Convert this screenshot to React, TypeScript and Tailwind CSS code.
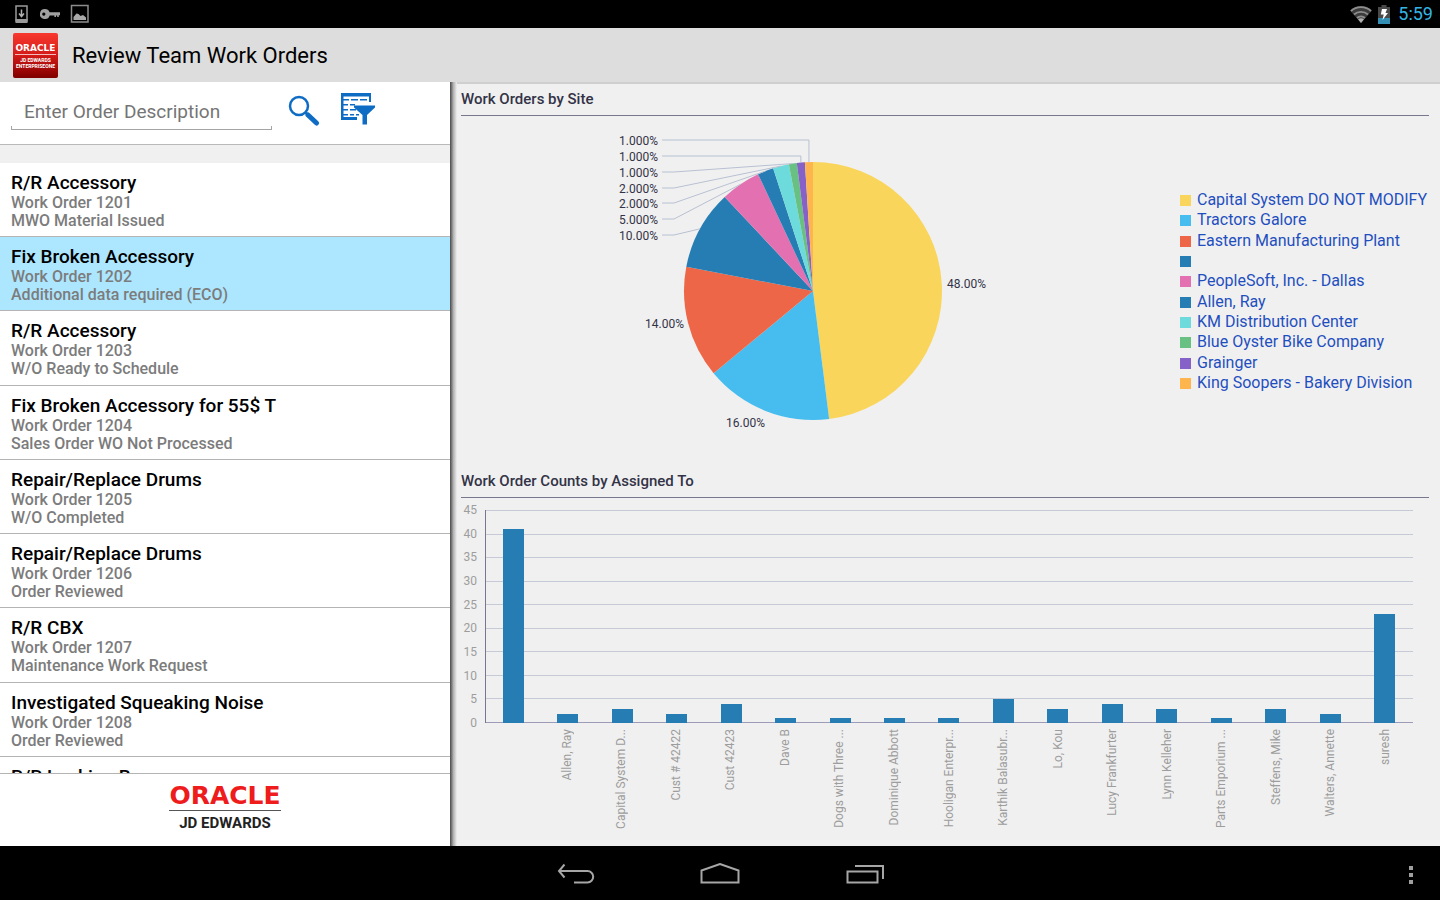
import React from "react";

const orders = [
  { title: "R/R Accessory", number: 1201, status: "MWO Material Issued" },
  { title: "Fix Broken Accessory", number: 1202, status: "Additional data required (ECO)" },
  { title: "R/R Accessory", number: 1203, status: "W/O Ready to Schedule" },
  { title: "Fix Broken Accessory for 55$ T", number: 1204, status: "Sales Order WO Not Processed" },
  { title: "Repair/Replace Drums", number: 1205, status: "W/O Completed" },
  { title: "Repair/Replace Drums", number: 1206, status: "Order Reviewed" },
  { title: "R/R CBX", number: 1207, status: "Maintenance Work Request" },
  { title: "Investigated Squeaking Noise", number: 1208, status: "Order Reviewed" },
  { title: "R/R Locking Bar", number: 1209, status: "Order Reviewed" },
];

const selectedOrder = 1202;

// labelX / labelY are relative to the centre of the pie
const sites = [
  { name: "Capital System DO NOT MODIFY", value: 48, color: "#fad55c", labelX: 134, labelY: -8 },
  { name: "Tractors Galore", value: 16, color: "#47bdef", labelX: -48, labelY: 131 },
  { name: "Eastern Manufacturing Plant", value: 14, color: "#ed6647", labelX: -129, labelY: 32 },
  { name: "", value: 10, color: "#267db3", labelX: -155, labelY: -56 },
  { name: "PeopleSoft, Inc. - Dallas", value: 5, color: "#e371b2", labelX: -155, labelY: -72 },
  { name: "Allen, Ray", value: 2, color: "#267db3", labelX: -155, labelY: -88 },
  { name: "KM Distribution Center", value: 2, color: "#6ddbdb", labelX: -155, labelY: -103 },
  { name: "Blue Oyster Bike Company", value: 1, color: "#68c182", labelX: -155, labelY: -119 },
  { name: "Grainger", value: 1, color: "#8561c8", labelX: -155, labelY: -135 },
  { name: "King Soopers - Bakery Division", value: 1, color: "#ffb54d", labelX: -155, labelY: -151 },
];

const counts = [
  { name: "", value: 41 },
  { name: "Allen, Ray", value: 2 },
  { name: "Capital System D...", value: 3 },
  { name: "Cust # 42422", value: 2 },
  { name: "Cust 42423", value: 4 },
  { name: "Dave B", value: 1 },
  { name: "Dogs with Three ...", value: 1 },
  { name: "Dominique Abbott", value: 1 },
  { name: "Hooligan Enterpr...", value: 1 },
  { name: "Karthik Balasubr...", value: 5 },
  { name: "Lo, Kou", value: 3 },
  { name: "Lucy Frankfurter", value: 4 },
  { name: "Lynn Kelleher", value: 3 },
  { name: "Parts Emporium ...", value: 1 },
  { name: "Steffens, Mike", value: 3 },
  { name: "Walters, Annette", value: 2 },
  { name: "suresh", value: 23 },
];

const ticks = [45, 40, 35, 30, 25, 20, 15, 10, 5, 0];

const StatusBar = () => {
  return (
    <div className="flex h-7 shrink-0 items-center justify-between bg-black pl-[14px] pr-[7px]">
      <div className="flex items-center gap-[10px]">
        <svg width="15" height="20" viewBox="0 0 15 20" fill="none">
          <path d="M2 2h11v15H2z" stroke="#9a9a9a" strokeWidth="1.5" />
          <path d="M1.5 15h12v4h-12z" fill="#9a9a9a" />
          <path d="M7.5 5.500v7M5 9.500l2.500 3 2.500-3" stroke="#b0b0b0" strokeWidth="1.500" />
        </svg>
        <svg width="21" height="14" viewBox="0 0 21 14">
          <path
            fillRule="evenodd"
            d="M6 2a5 5 0 0 1 4.600 3.200H21v3h-1.200V10h-1.600V8.500H17V10h-1.600V8.500h-4.700A5 5 0 1 1 6 2zM4.800 5.500a1.600 1.600 0 1 0 .01 0z"
            fill="#a0a0a0"
          />
        </svg>
        <svg width="20" height="20" viewBox="0 0 20 20">
          <path d="M1.500 1.500h16.500v16.500h-16.500z" fill="none" stroke="#8c8c8c" strokeWidth="1.500" />
          <path d="M3.500 16v-3l3-3.500 2 .5 2 2 2.500-1 3 2.500V16z" fill="#a8a8a8" />
        </svg>
      </div>
      <div className="flex items-center">
        <svg width="22" height="18" viewBox="0 0 22 18">
          <path d="M0 5.500a16 16 0 0 1 22 0L11 18z" fill="#3c3c3c" />
          <path
            d="M1 6a15 15 0 0 1 20 0M4 9.500a10.500 10.500 0 0 1 14 0M7 13a6 6 0 0 1 8 0"
            fill="none"
            stroke="#8e8e8e"
            strokeWidth="1.800"
          />
          <path d="M8 14.300a5 5 0 0 1 6 0L11 18z" fill="#b0b0b0" />
        </svg>
        <svg className="ml-[6px]" width="12" height="19" viewBox="0 0 12 19">
          <path d="M0 2h3.500V0h5v2H12v12H0z" fill="#4a4a4a" />
          <path d="M0 13h12v6H0z" fill="#3390b4" />
          <path d="M4 4h5L7.500 8H10l-5.500 7 1.200-5.500H2.800z" fill="#fff" />
        </svg>
        <span className="ml-2 text-[18px] leading-7 text-[#33b5e5]">5:59</span>
      </div>
    </div>
  );
};

const Header = () => {
  return (
    <header className="flex h-[54px] shrink-0 items-center bg-[#dddddd] pl-[13px]">
      <div className="flex h-[45px] w-[45px] flex-col items-center justify-center rounded-[2px] bg-linear-to-b from-[#f8392f] via-[#d31a17] to-[#800000] text-white">
        <span className="border-b border-white/70 font-['DejaVu_Sans'] text-[9px] leading-3 font-bold">
          ORACLE
        </span>
        <span className="mt-[2px] text-[5px] leading-[6px] font-bold">JD EDWARDS</span>
        <span className="text-[5px] leading-[6px] font-bold">ENTERPRISEONE</span>
      </div>
      <h1 className="ml-[14px] text-[22px] text-black">Review Team Work Orders</h1>
    </header>
  );
};

const SearchBar = () => {
  return (
    <form className="flex h-[63px] shrink-0 items-start border-b border-[#b9b9b9] pl-[11px]">
      <div className="mt-3 flex w-[261px] flex-col">
        <input
          type="text"
          aria-label="Order description"
          placeholder="Enter Order Description"
          className="h-8 w-full bg-transparent px-[13px] pt-[3px] text-[19px] leading-7 text-black outline-none placeholder:text-[#757575]"
        />
        <span className="h-[4px] border-x border-b border-[#a5a5a5]" />
      </div>
      <button type="button" aria-label="Search" className="mt-3 ml-4">
        <svg width="32" height="32" viewBox="0 0 32 32" fill="none" stroke="#0e6cc4">
          <circle cx="11" cy="12" r="9" strokeWidth="2.500" />
          <path d="M17.500 18.500l3 3" strokeWidth="2.500" />
          <path d="M20 21l8.500 8" strokeWidth="5" strokeLinecap="round" />
        </svg>
      </button>
      <button type="button" aria-label="Filter" className="mt-[10px] ml-5">
        <svg width="36" height="34" viewBox="0 0 36 34">
          <path
            d="M1 1h30v9h-2V4.500H3.500V7H9v1.500H3.500V12H8v1.500H3.500V17H8v1.500H3.500V22H8v1.500H3.500V25H17v3H1z"
            fill="#0e6cc4"
          />
          <path d="M11 7h7v1.500h-7zM20 7h7v1.500h-7zM10 12h5v1.500h-5zM10 17h6v1.500h-6zM10 22h4v1.500h-4zM16 22h3v1.500h-3z" fill="#0e6cc4" />
          <path d="M14 13.500h21v2L27 23v9.500h-4.500V23L14 15.500z" fill="#0e6cc4" />
        </svg>
      </button>
    </form>
  );
};

const OrderList = () => {
  return (
    <div className="min-h-0 flex-1 overflow-hidden bg-[#f0f0f0] pt-[18px]">
      <ul className="grid h-[668px] grid-rows-9 bg-white">
        {orders.map((order) => (
          <li
            key={order.number}
            className={
              order.number === selectedOrder
                ? "border-b border-[#b4b4b4] bg-[#ade7ff]"
                : "border-b border-[#b4b4b4]"
            }
          >
            <a href="#" className="block px-[11px] pt-2">
              <p className="text-[19px] leading-[23px] font-medium text-black">{order.title}</p>
              <p className="text-[16px] leading-[18px] font-medium text-[#7c7c7c]">
                Work Order {order.number}
              </p>
              <p className="text-[16px] leading-[18px] font-medium text-[#7c7c7c]">{order.status}</p>
            </a>
          </li>
        ))}
      </ul>
    </div>
  );
};

const Brand = () => {
  return (
    <div className="flex h-[73px] shrink-0 flex-col items-center border-t border-[#b4b4b4] pt-2">
      <div className="flex flex-col items-center">
        <p className="border-b border-[#555] font-['DejaVu_Sans'] text-[25px] leading-7 font-bold text-[#ee1c1c]">
          ORACLE
        </p>
        <p className="mt-[3px] text-[15px] leading-[18px] font-bold text-[#222]">JD EDWARDS</p>
      </div>
    </div>
  );
};

const edge = (share: number) => {
  const angle = (share / 100) * 2 * Math.PI;
  return [129 * Math.sin(angle), -129 * Math.cos(angle)];
};

const PieChart = () => {
  let total = 0;
  const slices = sites.map((site) => {
    const start = total;
    total += site.value;
    return { ...site, from: edge(start), to: edge(total), mid: edge(start + site.value / 2) };
  });

  return (
    <svg width="440" height="320" viewBox="-212 -171 440 320" role="img" aria-label="Work Orders by Site">
      {slices.map((s, i) => (
        <path key={i} d={`M0 0L${s.from[0]} ${s.from[1]}A129 129 0 0 1 ${s.to[0]} ${s.to[1]}Z`} fill={s.color} />
      ))}
      {slices.slice(3).map((s, i) => (
        <path
          key={i}
          d={
            s.labelY < -129
              ? `M-151 ${s.labelY}H${s.mid[0]}V-129`
              : `M-151 ${s.labelY}H-139L${s.mid[0]} ${s.mid[1]}`
          }
          fill="none"
          stroke="#b8c0d2"
        />
      ))}
      {slices.map((s, i) => (
        <text
          key={i}
          x={s.labelX}
          y={s.labelY + 5}
          textAnchor={s.labelX > 0 ? "start" : "end"}
          className="fill-[#333347] text-[12px]"
        >
          {s.value.toFixed(s.value < 10 ? 3 : 2)}%
        </text>
      ))}
    </svg>
  );
};

const Legend = () => {
  return (
    <ul className="mt-[74px] grid h-[203px] w-[249px] shrink-0 grid-rows-10">
      {sites.map((site, i) => (
        <li key={i} className="flex items-center gap-[6px]">
          <span className="mt-px h-[11px] w-[11px] shrink-0" style={{ backgroundColor: site.color }} />
          {site.name && (
            <a href="#" className="text-[16px] leading-5 whitespace-nowrap text-[#1f4fbf]">
              {site.name}
            </a>
          )}
        </li>
      ))}
    </ul>
  );
};

const BarChart = () => {
  return (
    <div className="grid grid-cols-[16px_1fr] gap-x-2 pt-3 pr-4">
      <div className="-my-[6px] flex flex-col justify-between text-right text-[12px] leading-3 text-[#9d9d9d]">
        {ticks.map((tick) => (
          <span key={tick}>{tick}</span>
        ))}
      </div>
      <div className="relative h-[213px] border-l border-[#77778f]">
        <div className="absolute inset-0 flex flex-col justify-between">
          {ticks.map((tick) => (
            <span key={tick} className={tick === 0 ? "h-px bg-[#9c9cb8]" : "h-px bg-[#c6c9d6]"} />
          ))}
        </div>
        <div className="relative flex h-full pr-px">
          {counts.map((count, i) => (
            <div key={i} className="flex flex-1 items-end justify-center">
              <div className="w-[21px] bg-[#267db3]" style={{ height: `${(count.value / 45) * 100}%` }} />
            </div>
          ))}
        </div>
      </div>
      <div className="col-start-2 flex h-[110px] pt-[6px] pr-px">
        {counts.map((count, i) => (
          <div key={i} className="flex flex-1 items-start justify-center">
            <span className="rotate-180 text-[12px] leading-4 whitespace-nowrap text-[#9d9d9d] [writing-mode:vertical-rl]">
              {count.name}
            </span>
          </div>
        ))}
      </div>
    </div>
  );
};

const ChartTitle = ({ children }: { children: React.ReactNode }) => {
  return (
    <h2 className="border-b border-[#77778f] pb-[6px] text-[15px] leading-5 font-medium text-[#333347]">
      {children}
    </h2>
  );
};

const NavBar = () => {
  return (
    <nav className="grid h-[54px] shrink-0 grid-cols-3 items-center bg-black pt-[3px]">
      <div className="col-start-2 flex justify-center gap-[104px]">
        <button type="button" aria-label="Back">
          <svg width="40" height="24" viewBox="0 0 40 24" fill="none" stroke="#a6a6a6" strokeWidth="2">
            <path d="M8.500 1.500L3 8l5.500 6.500M3 8h28.500a5.700 5.700 0 0 1 0 11.400H18" />
          </svg>
        </button>
        <button type="button" aria-label="Home">
          <svg width="40" height="24" viewBox="0 0 40 24" fill="none" stroke="#a6a6a6" strokeWidth="2">
            <path d="M1.500 19.500V7.500L20 1l18.500 6.500v12z" />
          </svg>
        </button>
        <button type="button" aria-label="Recent apps">
          <svg width="40" height="24" viewBox="0 0 40 24" fill="none" stroke="#a6a6a6" strokeWidth="2">
            <path d="M3.500 8.500h30v11h-30zM11 3h28v13" />
          </svg>
        </button>
      </div>
      <button type="button" aria-label="More options" className="mr-[26px] justify-self-end">
        <svg width="6" height="20" viewBox="0 0 6 20" fill="#a0a0a0">
          <path d="M1 1h4v4H1zM1 8h4v4H1zM1 15h4v4H1z" />
        </svg>
      </button>
    </nav>
  );
};

const App = () => {
  return (
    <div className="flex h-screen flex-col overflow-hidden bg-black font-['Roboto',sans-serif]">
      <StatusBar />
      <Header />
      <main className="flex min-h-0 flex-1">
        <aside className="flex w-[450px] shrink-0 flex-col bg-white">
          <SearchBar />
          <OrderList />
          <Brand />
        </aside>
        <div className="w-[7px] shrink-0 bg-linear-to-r from-[#4a4a4a] via-[#b4b4b4] to-[#f0f0f0]" />
        <div className="min-w-0 flex-1 overflow-hidden border-t-2 border-[#cfcfcf] bg-[#f0f0f0] pr-[11px] pl-1">
          <section className="pt-[5px]">
            <ChartTitle>Work Orders by Site</ChartTitle>
            <div className="flex h-[355px]">
              <div className="flex flex-1 justify-center pt-1">
                <PieChart />
              </div>
              <Legend />
            </div>
          </section>
          <section>
            <ChartTitle>Work Order Counts by Assigned To</ChartTitle>
            <BarChart />
          </section>
        </div>
      </main>
      <NavBar />
    </div>
  );
};

export default App;
